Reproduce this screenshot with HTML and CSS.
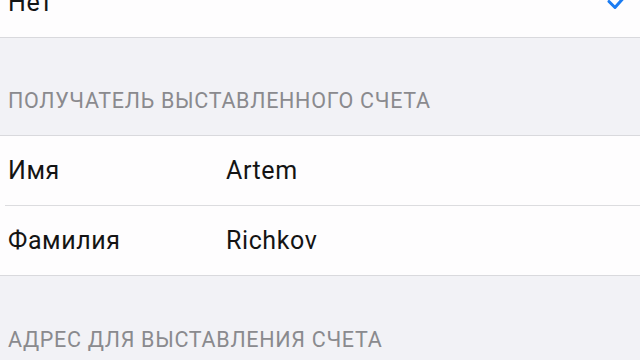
FILE: index.html
```html
<!DOCTYPE html>
<html lang="ru">
<head>
    <meta charset="UTF-8" />
    <meta name="viewport" content="width=device-width, initial-scale=1.0" />
    <title>Оплата</title>
    <link rel="stylesheet" href="styles.css">
</head>
<body>
    <div class="screen">
        <div class="group first">
            <div class="row">
                <span class="label">Нет</span>
                <svg class="check" width="22" height="18" viewBox="0 0 22 18">
                    <path d="M2 9.5 L8 15.5 L20 2" fill="none" stroke="#1b7cf2" stroke-width="3" stroke-linecap="round" stroke-linejoin="round"/>
                </svg>
            </div>
        </div>

        <div class="section-title">ПОЛУЧАТЕЛЬ ВЫСТАВЛЕННОГО СЧЕТА</div>
        <div class="group">
            <div class="row">
                <span class="label">Имя</span>
                <span class="value">Artem</span>
            </div>
            <div class="row">
                <span class="label">Фамилия</span>
                <span class="value">Richkov</span>
            </div>
        </div>

        <div class="section-title last">АДРЕС ДЛЯ ВЫСТАВЛЕНИЯ СЧЕТА</div>
    </div>
</body>
</html>
```

FILE: styles.css
```css
body{
    margin: 0;
    background-color: #f2f2f6;
    font-family: Roboto, "Noto Sans", sans-serif;
    overflow: hidden;
}
.screen{
    margin-top: -32px;
}
.group{
    background-color: #fefdfe;
    border-top: 1px solid #d9d9dd;
    border-bottom: 1px solid #d9d9dd;
}
.group.first{
    border-top: none;
}
.row{
    display: flex;
    align-items: center;
    height: 69px;
    padding: 0 8px;
    font-size: 25px;
    letter-spacing: 0.6px;
    color: #141414;
}
.row + .row{
    border-top: 1px solid #dcdcdf;
    margin-left: 5px;
    padding-left: 3px;
}
.label{
    width: 218px;
}
.check{
    margin-left: auto;
    margin-right: 3px;
    margin-top: -3px;
}
.section-title{
    padding: 51px 8px 22px;
    font-size: 21.5px;
    letter-spacing: 0.7px;
    color: #8a8a8e;
    line-height: 24px;
}
.section-title.last{
    padding-top: 52px;
}
```
